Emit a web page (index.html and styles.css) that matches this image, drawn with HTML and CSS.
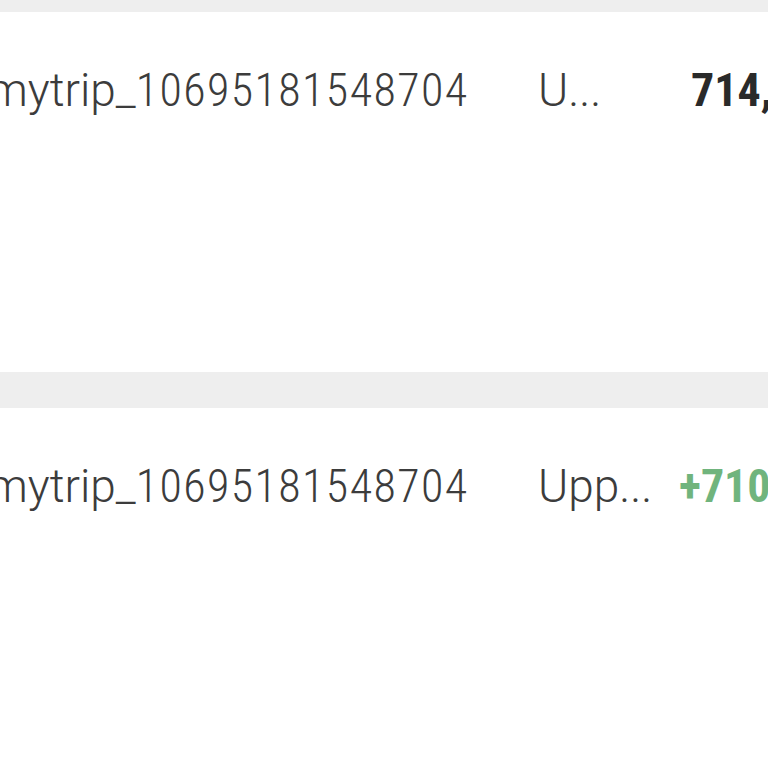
FILE: index.html
```html
<!DOCTYPE html>
<html>
<head>
<meta charset="utf-8">
<link rel="stylesheet" href="styles.css">
</head>
<body>
<div class="list">
  <div class="sep sep-top"></div>
  <div class="row">
    <span class="name">mytrip_<span class="num">10695181548704</span></span>
    <span class="desc">U...</span>
    <span class="amount">714,</span>
  </div>
  <div class="sep"></div>
  <div class="row">
    <span class="name">mytrip_<span class="num">10695181548704</span></span>
    <span class="desc desc-wide">Upp...</span>
    <span class="amount plus">+710</span>
  </div>
</div>
</body>
</html>
```
FILE: styles.css
```css
html, body {
  margin: 0;
  padding: 0;
  background: #ffffff;
  overflow: hidden;
  width: 768px;
  height: 768px;
}
.list {
  font-family: Roboto, "Open Sans", sans-serif;
  font-weight: 300;
  color: #3c3c3c;
}
.sep {
  height: 36px;
  background: #eeeeee;
}
.sep-top {
  height: 12px;
}
.row {
  height: 360px;
  display: flex;
  align-items: flex-start;
  white-space: nowrap;
  font-size: 46px;
  line-height: 46px;
  padding-top: 55px;
  box-sizing: border-box;
  margin-left: -13px;
}
.name {
  width: 551px;
  flex: none;
}
.num {
  font-stretch: 84%;
  letter-spacing: 1.4px;
}
.desc {
  width: 153px;
  flex: none;
}
.desc-wide {
  width: 141px;
}
.amount {
  font-weight: 700;
  font-stretch: 84%;
  color: #2a2a2a;
  flex: none;
}
.amount.plus {
  color: #70b47d;
}
```
